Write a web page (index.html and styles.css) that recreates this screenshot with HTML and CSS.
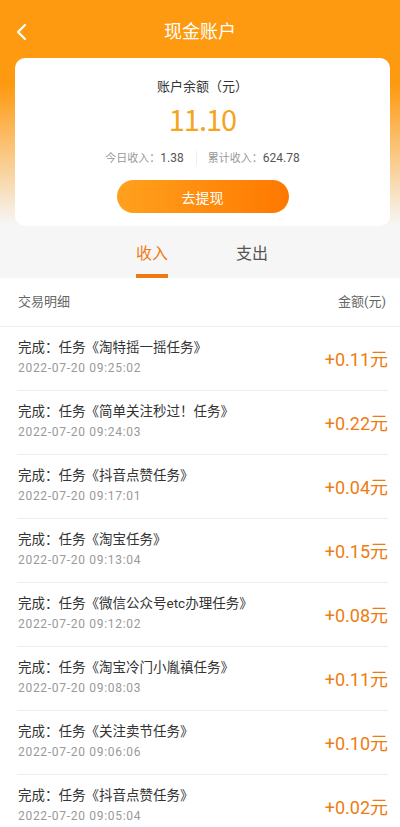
FILE: index.html
```html
<!DOCTYPE html>
<html lang="zh-CN">
<head>
    <meta charset="UTF-8">
    <meta name="viewport" content="width=device-width, initial-scale=1.0">
    <title>现金账户</title>
    <link rel="stylesheet" href="styles.css">
</head>
<body>
    <div class="top">
        <div class="nav">
            <svg class="back" width="12" height="18" viewBox="0 0 12 18">
                <path d="M10 2 L3 9 L10 16" fill="none" stroke="#fff" stroke-width="2.2" stroke-linecap="round" stroke-linejoin="round"/>
            </svg>
            <div class="nav-title">现金账户</div>
        </div>

        <!-- 余额卡片 -->
        <div class="card">
            <div class="card-label">账户余额（元）</div>
            <div class="balance">11.10</div>
            <div class="stats">
                <div class="stat">今日收入：<span>1.38</span></div>
                <div class="stat-line"></div>
                <div class="stat">累计收入：<span>624.78</span></div>
            </div>
            <button class="withdraw">去提现</button>
        </div>
    </div>

    <div class="tabs">
        <div class="tab active">收入<i></i></div>
        <div class="tab">支出<i></i></div>
    </div>

    <div class="list">
        <div class="list-head">
            <span>交易明细</span>
            <span>金额(元)</span>
        </div>
        <div id="items"></div>
    </div>

    <script>
        var rows = [
            ['淘特摇一摇任务', '09:25:02', '0.11'],
            ['简单关注秒过！任务', '09:24:03', '0.22'],
            ['抖音点赞任务', '09:17:01', '0.04'],
            ['淘宝任务', '09:13:04', '0.15'],
            ['微信公众号etc办理任务', '09:12:02', '0.08'],
            ['淘宝冷门小胤禛任务', '09:08:03', '0.11'],
            ['关注卖节任务', '09:06:06', '0.10'],
            ['抖音点赞任务', '09:05:04', '0.02']
        ];

        var html = '';
        rows.forEach(function (r) {
            html += '<div class="item">' +
                '<div class="item-info">' +
                '<div class="item-title">完成：任务《' + r[0] + '》</div>' +
                '<div class="item-date">2022-07-20 ' + r[1] + '</div>' +
                '</div>' +
                '<div class="item-amount">+' + r[2] + '元</div>' +
                '</div>';
        });
        document.getElementById('items').innerHTML = html;
    </script>
</body>
</html>
```

FILE: styles.css
```css
body {
    margin: 0;
    background: #f6f6f6;
    font-family: Roboto, "Noto Sans CJK SC", sans-serif;
    color: #333;
}
.top {
    background: linear-gradient(to bottom, #fe9a10 0, #fe9a10 85px, #f6f6f6 225px);
    padding-bottom: 1px;
}
.nav {
    position: relative;
    height: 58px;
    padding-top: 14px;
    box-sizing: border-box;
    text-align: center;
}
.back {
    position: absolute;
    left: 15px;
    top: 23px;
}
.nav-title {
    color: #fff;
    font-size: 18px;
    line-height: 36px;
}
.card {
    margin: 0 10px 0 15px;
    background: #fff;
    border-radius: 10px;
    padding: 20px 0 13px;
    text-align: center;
}
.card-label {
    font-size: 13px;
    line-height: 18px;
    color: #333;
}
.balance {
    margin-top: 4px;
    font-family: "Noto Sans CJK SC", sans-serif;
    font-size: 29px;
    line-height: 36px;
    letter-spacing: -1px;
    color: #f5a51c;
}
.stats {
    display: flex;
    justify-content: center;
    align-items: center;
    margin-top: 14px;
    height: 16px;
}
.stat {
    font-size: 11px;
    color: #999;
    line-height: 16px;
}
.stat span {
    font-size: 12px;
    color: #555;
}
.stat-line {
    width: 1px;
    height: 14px;
    background: #eee;
    margin: 0 11px 0 12px;
}
.withdraw {
    display: block;
    margin: 14px auto 0;
    width: 172px;
    height: 33px;
    border: none;
    border-radius: 17px;
    background: linear-gradient(to right, #ffa11d, #ff7800);
    color: #fff;
    font-family: inherit;
    font-size: 14px;
}
.tabs {
    display: flex;
    justify-content: center;
    padding: 16px 0 0 4px;
}
.tab {
    width: 100px;
    text-align: center;
    font-size: 16px;
    line-height: 22px;
    color: #555;
}
.tab i {
    display: block;
    width: 32px;
    height: 4px;
    margin: 9px auto 0;
}
.tab.active {
    color: #f07a12;
}
.tab.active i {
    background: #f07a12;
}
.list {
    background: #fff;
}
.list-head {
    display: flex;
    justify-content: space-between;
    height: 48px;
    line-height: 48px;
    padding: 0 14px 0 18px;
    font-size: 13px;
    color: #666;
    border-bottom: 1px solid #eee;
}
.item {
    display: flex;
    justify-content: space-between;
    align-items: center;
    margin: 0 12px 0 17px;
    padding: 10px 0 13px 1px;
    border-bottom: 1px solid #eee;
}
.item-title {
    font-size: 13.5px;
    line-height: 20px;
    color: #333;
}
.item-date {
    margin-top: 2px;
    font-size: 12px;
    line-height: 18px;
    letter-spacing: 0.7px;
    color: #999;
}
.item-amount {
    font-size: 18px;
    color: #ee7d10;
    padding-top: 2px;
}
```
